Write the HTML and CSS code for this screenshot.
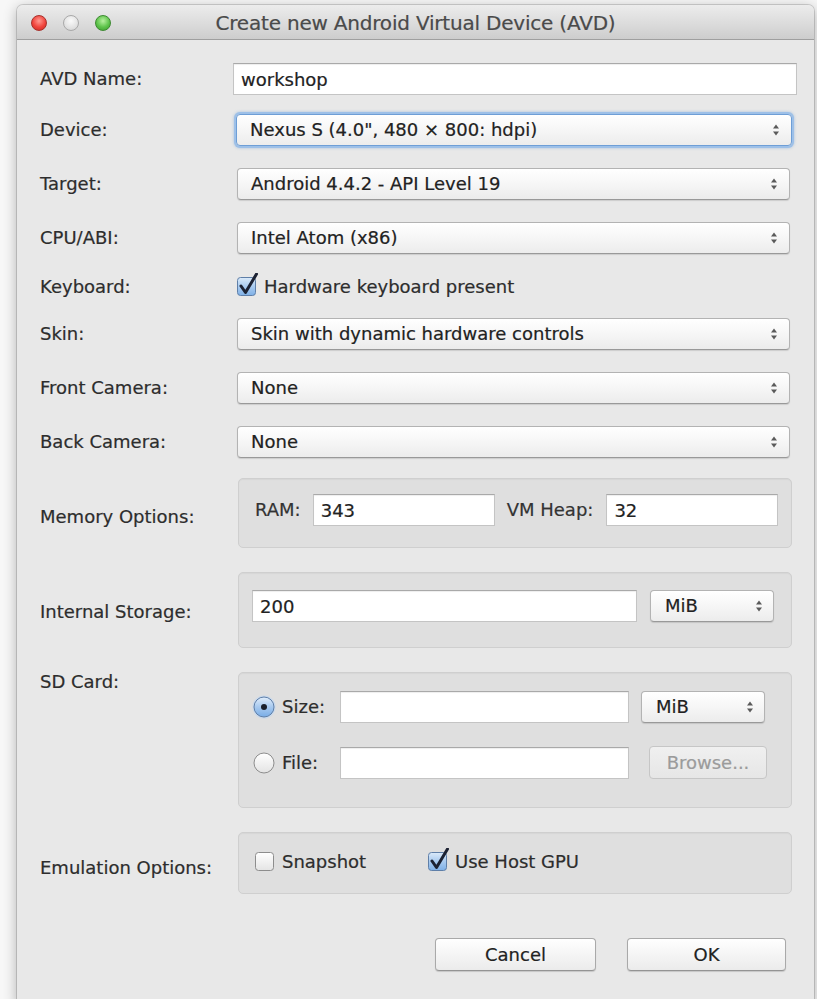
FILE: index.html
```html
<!DOCTYPE html>
<html lang="en">
<head>
<meta charset="utf-8">
<title>Create new Android Virtual Device (AVD)</title>
<link rel="stylesheet" href="styles.css">
</head>
<body>
<div class="window">
  <header class="titlebar">
    <div class="lights">
      <span class="light close"></span>
      <span class="light minimize"></span>
      <span class="light zoom"></span>
    </div>
    <div class="title">Create new Android Virtual Device (AVD)</div>
    <div></div>
  </header>

  <main class="content">
    <div class="form">
      <div class="row r-name">
        <span class="lbl">AVD Name:</span>
        <input class="text name-input" type="text" value="workshop">
      </div>

      <div class="row">
        <span class="lbl">Device:</span>
        <div class="popup focused">
          <span class="popup-text">Nexus S (4.0", 480 × 800: hdpi)</span>
          <svg class="arrows" viewBox="0 0 8 14" width="8" height="14"><path d="M4 1.5 L7 5.5 H1 Z M4 12.5 L7 8.5 H1 Z"/></svg>
        </div>
      </div>

      <div class="row">
        <span class="lbl">Target:</span>
        <div class="popup">
          <span class="popup-text">Android 4.4.2 - API Level 19</span>
          <svg class="arrows" viewBox="0 0 8 14" width="8" height="14"><path d="M4 1.5 L7 5.5 H1 Z M4 12.5 L7 8.5 H1 Z"/></svg>
        </div>
      </div>

      <div class="row">
        <span class="lbl">CPU/ABI:</span>
        <div class="popup">
          <span class="popup-text">Intel Atom (x86)</span>
          <svg class="arrows" viewBox="0 0 8 14" width="8" height="14"><path d="M4 1.5 L7 5.5 H1 Z M4 12.5 L7 8.5 H1 Z"/></svg>
        </div>
      </div>

      <div class="row r-kb">
        <span class="lbl">Keyboard:</span>
        <label class="check">
          <svg class="box" viewBox="0 0 22 24" width="22" height="24">
            <defs>
              <linearGradient id="aquaKb" x1="0" y1="0" x2="0" y2="1">
                <stop offset="0" stop-color="#dcebfa"/>
                <stop offset="0.5" stop-color="#a9cbf0"/>
                <stop offset="1" stop-color="#7fb0e6"/>
              </linearGradient>
            </defs>
            <rect x="0.5" y="4.5" width="18" height="18" rx="3" fill="url(#aquaKb)" stroke="#5f7fa8"/>
            <path d="M4 13 L8.5 19.5 L19.5 1" fill="none" stroke="#1c2233" stroke-width="3" stroke-linecap="round" stroke-linejoin="round"/>
          </svg>
          <span>Hardware keyboard present</span>
        </label>
      </div>

      <div class="row">
        <span class="lbl">Skin:</span>
        <div class="popup">
          <span class="popup-text">Skin with dynamic hardware controls</span>
          <svg class="arrows" viewBox="0 0 8 14" width="8" height="14"><path d="M4 1.5 L7 5.5 H1 Z M4 12.5 L7 8.5 H1 Z"/></svg>
        </div>
      </div>

      <div class="row">
        <span class="lbl">Front Camera:</span>
        <div class="popup">
          <span class="popup-text">None</span>
          <svg class="arrows" viewBox="0 0 8 14" width="8" height="14"><path d="M4 1.5 L7 5.5 H1 Z M4 12.5 L7 8.5 H1 Z"/></svg>
        </div>
      </div>

      <div class="row">
        <span class="lbl">Back Camera:</span>
        <div class="popup">
          <span class="popup-text">None</span>
          <svg class="arrows" viewBox="0 0 8 14" width="8" height="14"><path d="M4 1.5 L7 5.5 H1 Z M4 12.5 L7 8.5 H1 Z"/></svg>
        </div>
      </div>

      <div class="row r-mem">
        <span class="lbl lbl-mem">Memory Options:</span>
        <div class="group mem">
          <span class="sub">RAM:</span>
          <input class="text ram" type="text" value="343">
          <span class="sub">VM Heap:</span>
          <input class="text heap" type="text" value="32">
        </div>
      </div>

      <div class="row r-storage">
        <span class="lbl lbl-storage">Internal Storage:</span>
        <div class="group storage">
          <input class="text grow" type="text" value="200">
          <div class="popup unit">
            <span class="popup-text">MiB</span>
            <svg class="arrows" viewBox="0 0 8 14" width="8" height="14"><path d="M4 1.5 L7 5.5 H1 Z M4 12.5 L7 8.5 H1 Z"/></svg>
          </div>
        </div>
      </div>

      <div class="row r-sd">
        <span class="lbl lbl-sd">SD Card:</span>
        <div class="group sd">
          <label class="radio">
            <svg viewBox="0 0 24 24" width="24" height="24">
              <defs>
                <linearGradient id="aquaRadio" x1="0" y1="0" x2="0" y2="1">
                  <stop offset="0" stop-color="#e2eefb"/>
                  <stop offset="0.5" stop-color="#a7c9ef"/>
                  <stop offset="1" stop-color="#78ace6"/>
                </linearGradient>
              </defs>
              <circle cx="12" cy="12" r="11.5" fill="#bcd6f3" opacity="0.6"/>
              <circle cx="12" cy="12" r="10" fill="url(#aquaRadio)" stroke="#5f7fa8"/>
              <circle cx="12" cy="12" r="3" fill="#1a1f2b"/>
            </svg>
            <span>Size:</span>
          </label>
          <input class="text" type="text" value="">
          <div class="popup unit sd-unit">
            <span class="popup-text">MiB</span>
            <svg class="arrows" viewBox="0 0 8 14" width="8" height="14"><path d="M4 1.5 L7 5.5 H1 Z M4 12.5 L7 8.5 H1 Z"/></svg>
          </div>

          <label class="radio">
            <svg viewBox="0 0 24 24" width="24" height="24">
              <defs>
                <linearGradient id="plainRadio" x1="0" y1="0" x2="0" y2="1">
                  <stop offset="0" stop-color="#ffffff"/>
                  <stop offset="1" stop-color="#e3e3e3"/>
                </linearGradient>
              </defs>
              <circle cx="12" cy="12" r="10" fill="url(#plainRadio)" stroke="#8d8d8d"/>
            </svg>
            <span>File:</span>
          </label>
          <input class="text" type="text" value="">
          <button class="btn browse" type="button" disabled>Browse...</button>
        </div>
      </div>

      <div class="row r-emu">
        <span class="lbl lbl-emu">Emulation Options:</span>
        <div class="group emu">
          <label class="check">
            <svg class="box" viewBox="0 0 22 24" width="22" height="24">
              <defs>
                <linearGradient id="plainBox" x1="0" y1="0" x2="0" y2="1">
                  <stop offset="0" stop-color="#ffffff"/>
                  <stop offset="1" stop-color="#e4e4e4"/>
                </linearGradient>
              </defs>
              <rect x="0.5" y="4.5" width="18" height="18" rx="3" fill="url(#plainBox)" stroke="#8d8d8d"/>
            </svg>
            <span>Snapshot</span>
          </label>
          <label class="check">
            <svg class="box" viewBox="0 0 22 24" width="22" height="24">
              <defs>
                <linearGradient id="aquaGpu" x1="0" y1="0" x2="0" y2="1">
                  <stop offset="0" stop-color="#dcebfa"/>
                  <stop offset="0.5" stop-color="#a9cbf0"/>
                  <stop offset="1" stop-color="#7fb0e6"/>
                </linearGradient>
              </defs>
              <rect x="0.5" y="4.5" width="18" height="18" rx="3" fill="url(#aquaGpu)" stroke="#5f7fa8"/>
              <path d="M4 13 L8.5 19.5 L19.5 1" fill="none" stroke="#1c2233" stroke-width="3" stroke-linecap="round" stroke-linejoin="round"/>
            </svg>
            <span>Use Host GPU</span>
          </label>
        </div>
      </div>
    </div>

    <div class="actions">
      <button class="btn cancel" type="button">Cancel</button>
      <button class="btn ok" type="button">OK</button>
    </div>
  </main>
</div>
</body>
</html>
```

FILE: styles.css
```css
html, body {
  margin: 0;
  height: 100%;
  overflow: hidden;
}

body {
  background: #f7f7f7;
  font-family: "DejaVu Sans", "Liberation Sans", sans-serif;
  font-size: 18px;
  line-height: 22px;
  color: #2b2b2b;
  -webkit-text-stroke: 0.2px currentColor;
}

/* dialog window */
.window {
  margin: 5px 0 0 17px;
  width: 797px;
  height: 1000px;
  background: #e8e8e8;
  border-radius: 6px 6px 0 0;
  box-shadow: 0 0 0 1px rgba(0, 0, 0, 0.14), 0 3px 14px rgba(0, 0, 0, 0.3);
}

.titlebar {
  box-sizing: border-box;
  height: 35px;
  display: grid;
  grid-template-columns: 1fr auto 1fr;
  align-items: center;
  background: linear-gradient(#ececec, #dadada 60%, #cdcdcd);
  border-bottom: 1px solid #9f9f9f;
  border-radius: 6px 6px 0 0;
}

.lights {
  display: flex;
  gap: 16px;
  padding-left: 14px;
  padding-top: 1px;
}

.light {
  width: 16px;
  height: 16px;
  border-radius: 50%;
  box-sizing: border-box;
}

.light.close {
  background: radial-gradient(circle at 50% 35%, #ff9a92 0, #f0443c 55%, #c52a24 100%);
  border: 1px solid #a8302b;
}

.light.minimize {
  background: radial-gradient(circle at 50% 35%, #fafafa 0, #e2e2e2 60%, #cfcfcf 100%);
  border: 1px solid #a9a9a9;
}

.light.zoom {
  background: radial-gradient(circle at 50% 35%, #b8f0a0 0, #5dc34a 55%, #3b9a2d 100%);
  border: 1px solid #3c8a30;
}

.title {
  font-size: 20px;
  color: #4a4a4a;
  letter-spacing: -0.2px;
  padding-top: 1px;
}

/* form body */
.content {
  padding: 23px 22px 0 23px;
}

.form {
  display: flex;
  flex-direction: column;
  gap: 22px;
}

.row {
  display: grid;
  grid-template-columns: 197px minmax(0, 1fr);
  align-items: center;
  min-height: 32px;
}

.r-name { margin-bottom: -3px; }
.r-kb { min-height: 20px; height: 20px; }
.r-mem { margin-top: -2px; }
.r-storage, .r-sd, .r-emu { margin-top: 2px; }

.lbl { color: #2d2d2d; }
.lbl-mem { padding-top: 7px; }
.lbl-storage { padding-top: 4px; }
.lbl-sd { align-self: start; margin-top: -1px; }
.lbl-emu { padding-top: 9px; }

/* text fields */
.text {
  box-sizing: border-box;
  height: 32px;
  width: 100%;
  margin: 0;
  padding: 0 7px;
  font: inherit;
  color: #222;
  background: #fff;
  border: 1px solid #c4c4c4;
  border-top-color: #a9a9a9;
  box-shadow: inset 0 1px 1px rgba(0, 0, 0, 0.07);
  outline: none;
  min-width: 0;
}

.name-input {
  width: calc(100% + 9px);
  margin-left: -4px;
}

/* pop-up buttons */
.popup {
  box-sizing: border-box;
  height: 32px;
  margin-right: 2px;
  display: flex;
  align-items: center;
  justify-content: space-between;
  padding: 0 11px 0 13px;
  background: linear-gradient(#ffffff, #f6f6f6 50%, #ececec);
  border: 1px solid #b3b3b3;
  border-bottom-color: #999;
  border-radius: 4px;
  box-shadow: 0 1px 1px rgba(0, 0, 0, 0.12);
  color: #222;
  white-space: nowrap;
}

.popup.focused {
  margin: 0 0 0 -1px;
  border-color: #6e9ed6;
  box-shadow: 0 0 0 2px #9dc0e8, 0 0 3px 2px rgba(110, 158, 214, 0.55);
}

.arrows {
  fill: #5a5a5a;
  flex: none;
  -webkit-text-stroke: 0;
}

.popup.unit {
  flex: none;
  width: 124px;
  margin: 0;
  padding: 0 10px 0 14px;
}

.popup.sd-unit { margin-left: 12px; }

/* group boxes */
.group {
  box-sizing: border-box;
  margin-left: 1px;
  background: #dfdfdf;
  border: 1px solid #cfcfcf;
  border-radius: 5px;
  box-shadow: inset 0 1px 1px rgba(0, 0, 0, 0.04);
}

.group.mem {
  display: flex;
  align-items: center;
  gap: 12px;
  padding: 15px 13px 21px 16px;
}

.group.mem .ram { flex: none; width: 182px; }
.group.mem .heap { flex: 1 1 0; width: 0; margin-left: 1px; }

.sub { color: #333; white-space: nowrap; }

.group.storage {
  display: flex;
  align-items: center;
  gap: 13px;
  padding: 17px 17px 25px 13px;
}

.grow { flex: 1 1 0; width: 0; }

.group.sd {
  display: grid;
  grid-template-columns: 88px 289px auto;
  row-gap: 23px;
  align-items: center;
  justify-items: start;
  padding: 18px 0 28px 13px;
}

.group.sd .text { width: 100%; }

.radio {
  display: flex;
  align-items: center;
  gap: 6px;
  color: #2d2d2d;
}

.radio svg { flex: none; }

.group.emu {
  display: grid;
  grid-template-columns: 173px auto;
  align-items: center;
  padding: 19px 16px 21px 16px;
  height: 62px;
}

.check {
  display: flex;
  align-items: center;
  gap: 5px;
  height: 20px;
  color: #2d2d2d;
  white-space: nowrap;
}

.check .box {
  flex: none;
  margin-top: -4px;
}

/* push buttons */
.btn {
  box-sizing: border-box;
  height: 33px;
  margin: 0;
  padding: 0;
  font: inherit;
  color: #222;
  background: linear-gradient(#ffffff, #f5f5f5 50%, #ebebeb);
  border: 1px solid #a9a9a9;
  border-bottom-color: #949494;
  border-radius: 4px;
  box-shadow: 0 1px 1px rgba(0, 0, 0, 0.15);
}

.btn.browse {
  width: 118px;
  margin-left: 20px;
  color: #9b9b9b;
  background: linear-gradient(#f0f0f0, #e6e6e6);
  border-color: #c6c6c6;
  box-shadow: none;
}

.actions {
  display: flex;
  justify-content: flex-end;
  gap: 31px;
  margin-top: 44px;
  margin-right: 6px;
}

.btn.cancel { width: 161px; }
.btn.ok { width: 159px; }
```
